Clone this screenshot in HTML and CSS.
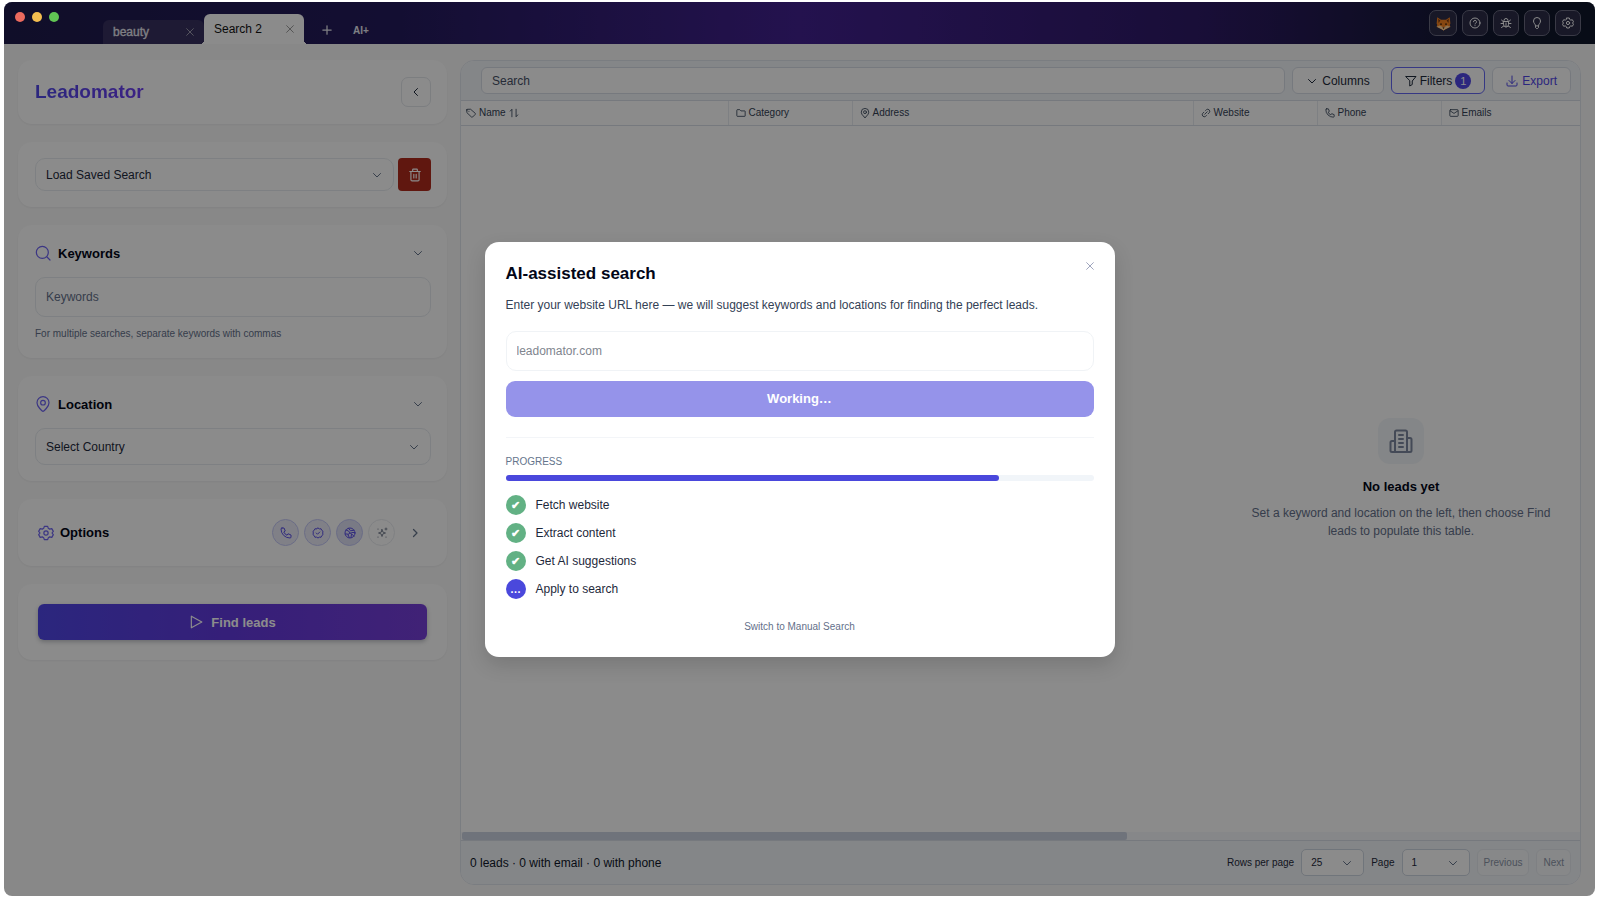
FILE: index.html
```html
<!DOCTYPE html>
<html lang="en">

<head>
  <meta charset="UTF-8">
  <meta name="viewport" content="width=device-width, initial-scale=1.0">
  <title>Leadomator</title>
  <link rel="stylesheet" href="styles.css">
</head>

<body>
  <!-- icon sprite -->
  <svg class="sprite" aria-hidden="true">
    <symbol id="i-x" viewBox="0 0 24 24"><path d="M4 4l16 16M20 4L4 20"/></symbol>
    <symbol id="i-plus" viewBox="0 0 24 24"><path d="M12 2v20M2 12h20"/></symbol>
    <symbol id="i-down" viewBox="0 0 24 24"><path d="M5 9l7 7 7-7"/></symbol>
    <symbol id="i-left" viewBox="0 0 24 24"><path d="M15 5l-7 7 7 7"/></symbol>
    <symbol id="i-right" viewBox="0 0 24 24"><path d="M9 5l7 7-7 7"/></symbol>
    <symbol id="i-search" viewBox="0 0 24 24"><circle cx="11" cy="11" r="9"/><path d="M18 18l4.500 4.500"/></symbol>
    <symbol id="i-pin" viewBox="0 0 24 24"><circle cx="12" cy="10" r="3.500"/><path d="M12 23c-1 0-9-7-9-13a9 9 0 0 1 18 0c0 6-8 13-9 13z"/></symbol>
    <symbol id="i-trash" viewBox="0 0 24 24"><path d="M3 6h18M5 6v14a2 2 0 0 0 2 2h10a2 2 0 0 0 2-2V6M8 6V3a1 1 0 0 1 1-1h6a1 1 0 0 1 1 1v3M10 11v6M14 11v6"/></symbol>
    <symbol id="i-hexgear" viewBox="0 0 24 24"><path d="M9.500 2h5l1 3 2 1.200 3.200-.700 2.300 4-2 2.500 2 2.500-2.300 4-3.200-.700-2 1.200-1 3h-5l-1-3-2-1.200-3.200.700-2.300-4 2-2.500-2-2.500 2.300-4 3.200.700 2-1.200z"/><circle cx="12" cy="12" r="3.200"/></symbol>
    <symbol id="i-phone" viewBox="0 0 24 24"><path d="M4 2h4l2.500 6-3 2a13 13 0 0 0 6.500 6.500l2-3 6 2.500v4a2 2 0 0 1-2 2A18 18 0 0 1 2 4a2 2 0 0 1 2-2z"/></symbol>
    <symbol id="i-badge" viewBox="0 0 24 24"><path d="M12 2l2.800 1.800 3.300-.300 1.300 3 2.600 2-.600 3.500.600 3.300-2.600 2.200-1.300 3-3.300-.200L12 22l-2.800-1.700-3.300.200-1.300-3L2 15.300l.600-3.300L2 8.500l2.600-2 1.300-3 3.300.300z"/><path d="M8.500 12l2.500 2.500 4.500-4.500"/></symbol>
    <symbol id="i-world" viewBox="0 0 24 24"><circle cx="12" cy="12" r="10"/><path d="M4 6l5 2 3 4 5 3 3 4M9 2.500l4 5 7-1M21.500 11l-6 0M2.500 14l5 0 3 7M12 12l-4 3M15 15l-1 6"/></symbol>
    <symbol id="i-spark" viewBox="0 0 24 24"><path d="M12 5l1.800 5.200L19 12l-5.200 1.800L12 19l-1.800-5.200L5 12l5.200-1.800zM20 2v4M18 4h4M4 4v.500M4 20v.500M20 20v.500"/></symbol>
    <symbol id="i-play" viewBox="0 0 24 24"><path d="M4 2l18 10L4 22z"/></symbol>
    <symbol id="i-help" viewBox="0 0 24 24"><circle cx="12" cy="12" r="10"/><path d="M9 9.500A3 3 0 1 1 13 12.500c-.700.300-1 .700-1 1.500M12 17.200v.300"/></symbol>
    <symbol id="i-bug" viewBox="0 0 24 24"><path d="M8 9V7a4 4 0 0 1 8 0v2M7 9h10v6a5 5 0 0 1-10 0zM2 13h5M17 13h5M3 21l4.500-3M21 21l-4.500-3M3 6l4.500 4M21 6l-4.500 4M12 12v8"/></symbol>
    <symbol id="i-bulb" viewBox="0 0 24 24"><path d="M9 17c0-3-4-4-4-9a7 7 0 0 1 14 0c0 5-4 6-4 9zM9 19v2l2 2h2l2-2v-2"/></symbol>
    <symbol id="i-tag" viewBox="0 0 24 24"><path d="M2 4v7l11 10.500a2 2 0 0 0 3 0l6-6a2 2 0 0 0 0-3L11 3H4a2 2 0 0 0-2 2zM7 8v.200"/></symbol>
    <symbol id="i-sort" viewBox="0 0 24 24"><path d="M7 21V3L3 7.500M17 3v18l4-4.500"/></symbol>
    <symbol id="i-folder" viewBox="0 0 24 24"><path d="M2 5a1 1 0 0 1 1-1h6l3 3h9a1 1 0 0 1 1 1v11a1 1 0 0 1-1 1H3a1 1 0 0 1-1-1z"/></symbol>
    <symbol id="i-link" viewBox="0 0 24 24"><path d="M9 15l6-6M11 6l2-2a5 5 0 0 1 7 7l-3 3M13 18l-2 2a5 5 0 0 1-7-7l3-3"/></symbol>
    <symbol id="i-mail" viewBox="0 0 24 24"><rect x="2" y="4" width="20" height="16" rx="2"/><path d="M3 7l9 6 9-6"/></symbol>
    <symbol id="i-filter" viewBox="0 0 24 24"><path d="M2 3h20l-7.500 9v7l-5 3V12z"/></symbol>
    <symbol id="i-export" viewBox="0 0 24 24"><path d="M2 16v4a2 2 0 0 0 2 2h16a2 2 0 0 0 2-2v-4M6 11l6 6 6-6M12 2v15"/></symbol>
    <symbol id="i-building" viewBox="0 0 24 24"><path d="M6 23V3a1.500 1.500 0 0 1 1.500-1.500h9A1.500 1.500 0 0 1 18 3v20M6 12H3a1.500 1.500 0 0 0-1.500 1.500v8A1.500 1.500 0 0 0 3 23h18a1.500 1.500 0 0 0 1.500-1.500v-11A1.500 1.500 0 0 0 21 9h-3M10 6h4M10 10h4M10 14h4M10 18h4"/></symbol>
  </svg>

  <div class="window">
    <header class="titlebar">
      <div class="lights">
        <span class="light red"></span>
        <span class="light yellow"></span>
        <span class="light green"></span>
      </div>
      <nav class="tabs">
        <div class="tab">
          <a href="#beauty">beauty</a>
          <button class="icon-btn" aria-label="Close beauty"><svg class="icon s10"><use href="#i-x"/></svg></button>
        </div>
        <div class="tab active">
          <a href="#search-2">Search 2</a>
          <button class="icon-btn" aria-label="Close Search 2"><svg class="icon s10"><use href="#i-x"/></svg></button>
        </div>
        <button class="tab-btn" aria-label="New tab"><svg class="icon s10 bold"><use href="#i-plus"/></svg></button>
        <button class="tab-btn">AI+</button>
      </nav>
      <div class="tools">
        <button class="tool" aria-label="Account">
          <svg class="fox" viewBox="0 0 24 24">
            <path d="M2 2l6 4h8l6-4 1 10-1 2 1 3-8 4-3 2-3-2-8-4 1-3-1-2z" fill="#f58220"/>
            <path d="M3.500 4.500L7 7l-3 4zM20.500 4.500L17 7l3 4z" fill="#7a3b12"/>
            <path d="M1 17l5-2 4 2 2 2 2-2 4-2 5 2-8 4-3 2-3-2z" fill="#ffd29a"/>
            <circle cx="8" cy="13" r="1.300" fill="#2b1608"/>
            <circle cx="16" cy="13" r="1.300" fill="#2b1608"/>
            <path d="M10.300 18.500h3.400L12 20.800z" fill="#2b1608"/>
          </svg>
        </button>
        <button class="tool" aria-label="Help"><svg class="icon s12"><use href="#i-help"/></svg></button>
        <button class="tool" aria-label="Report a bug"><svg class="icon s12"><use href="#i-bug"/></svg></button>
        <button class="tool" aria-label="Ideas"><svg class="icon s12"><use href="#i-bulb"/></svg></button>
        <button class="tool" aria-label="Settings"><svg class="icon s12"><use href="#i-hexgear"/></svg></button>
      </div>
    </header>

    <div class="content">
      <aside class="sidebar">
        <section class="card brand">
          <h1>Leadomator</h1>
          <button class="collapse" aria-label="Collapse sidebar"><svg class="icon s12"><use href="#i-left"/></svg></button>
        </section>

        <section class="card saved">
          <div class="select-wrap">
            <select class="field saved-select" aria-label="Load saved search"><option>Load Saved Search</option></select>
            <svg class="icon s12"><use href="#i-down"/></svg>
          </div>
          <button class="delete" aria-label="Delete search"><svg class="icon s14"><use href="#i-trash"/></svg></button>
        </section>

        <section class="card">
          <div class="card-head">
            <svg class="icon s16 accent thin"><use href="#i-search"/></svg>
            <h2><label for="keywords">Keywords</label></h2>
            <button class="icon-btn" aria-label="Toggle keywords"><svg class="icon s12"><use href="#i-down"/></svg></button>
          </div>
          <input class="field keywords" id="keywords" type="text" placeholder="Keywords">
          <p class="hint">For multiple searches, separate keywords with commas</p>
        </section>

        <section class="card">
          <div class="card-head">
            <svg class="icon s16 accent thin"><use href="#i-pin"/></svg>
            <h2><label for="country">Location</label></h2>
            <button class="icon-btn" aria-label="Toggle location"><svg class="icon s12"><use href="#i-down"/></svg></button>
          </div>
          <div class="select-wrap">
            <select class="field country" id="country"><option>Select Country</option></select>
            <svg class="icon s12"><use href="#i-down"/></svg>
          </div>
        </section>

        <section class="card options">
          <svg class="icon s16 accent thin"><use href="#i-hexgear"/></svg>
          <h2>Options</h2>
          <div class="pills">
            <button class="pill" aria-label="Phone"><svg class="icon s12"><use href="#i-phone"/></svg></button>
            <button class="pill" aria-label="Verified"><svg class="icon s12"><use href="#i-badge"/></svg></button>
            <button class="pill strong" aria-label="Website"><svg class="icon s12"><use href="#i-world"/></svg></button>
            <button class="pill off" aria-label="AI"><svg class="icon s12"><use href="#i-spark"/></svg></button>
          </div>
          <button class="icon-btn" aria-label="Show options"><svg class="icon s12 heavy"><use href="#i-right"/></svg></button>
        </section>

        <section class="card run">
          <button class="find"><svg class="icon s14"><use href="#i-play"/></svg>Find leads</button>
        </section>
      </aside>

      <main class="panel">
        <div class="toolbar">
          <input class="search" type="search" placeholder="Search" aria-label="Search">
          <button class="btn"><svg class="icon s12"><use href="#i-down"/></svg>Columns</button>
          <button class="btn filters"><svg class="icon s12"><use href="#i-filter"/></svg>Filters <span class="count">1</span></button>
          <button class="btn export"><svg class="icon s12"><use href="#i-export"/></svg>Export</button>
        </div>

        <div class="table-wrap">
          <div class="table-inner">
            <table>
              <colgroup>
                <col class="c-name"><col class="c-mid"><col class="c-address"><col class="c-mid"><col class="c-mid"><col>
              </colgroup>
              <thead>
                <tr>
                  <th><span><svg class="icon s10"><use href="#i-tag"/></svg>Name<svg class="icon s10"><use href="#i-sort"/></svg></span></th>
                  <th><span><svg class="icon s10"><use href="#i-folder"/></svg>Category</span></th>
                  <th><span><svg class="icon s10"><use href="#i-pin"/></svg>Address</span></th>
                  <th><span><svg class="icon s10"><use href="#i-link"/></svg>Website</span></th>
                  <th><span><svg class="icon s10"><use href="#i-phone"/></svg>Phone</span></th>
                  <th><span><svg class="icon s10"><use href="#i-mail"/></svg>Emails</span></th>
                </tr>
              </thead>
            </table>
            <div class="empty">
              <div class="empty-icon"><svg class="icon s24"><use href="#i-building"/></svg></div>
              <h3>No leads yet</h3>
              <p>Set a keyword and location on the left, then choose Find leads to populate this table.</p>
            </div>
          </div>
        </div>
        <div class="scroll-track"><div class="scroll-thumb"></div></div>

        <footer class="pager">
          <p class="totals">0 leads · 0 with email · 0 with phone</p>
          <label for="rows">Rows per page</label>
          <div class="select-wrap">
            <select class="rows" id="rows"><option>25</option></select>
            <svg class="icon s12"><use href="#i-down"/></svg>
          </div>
          <label for="page">Page</label>
          <div class="select-wrap">
            <select class="page" id="page"><option>1</option></select>
            <svg class="icon s12"><use href="#i-down"/></svg>
          </div>
          <button class="step" disabled>Previous</button>
          <button class="step" disabled>Next</button>
        </footer>
      </main>
    </div>

    <div class="overlay">
      <div class="modal" role="dialog" aria-labelledby="modal-title">
        <div class="modal-head">
          <h2 id="modal-title">AI-assisted search</h2>
          <button class="modal-close" aria-label="Close"><svg class="icon s10"><use href="#i-x"/></svg></button>
        </div>
        <p class="lead"><label for="url">Enter your website URL here — we will suggest keywords and locations for finding the perfect leads.</label></p>
        <input class="url" id="url" type="text" placeholder="leadomator.com">
        <button class="working">Working…</button>
        <div class="progress">
          <div class="progress-label">PROGRESS</div>
          <div class="bar"><div class="bar-fill" style="width: 84%"></div></div>
          <ul class="steps">
            <li><span class="dot done">✔</span>Fetch website</li>
            <li><span class="dot done">✔</span>Extract content</li>
            <li><span class="dot done">✔</span>Get AI suggestions</li>
            <li><span class="dot">…</span>Apply to search</li>
          </ul>
        </div>
        <a class="manual" href="#manual">Switch to Manual Search</a>
      </div>
    </div>
  </div>
</body>

</html>
```
FILE: styles.css
```css
* {
  box-sizing: border-box;
}

body {
  margin: 0;
  padding: 2px 5px 2px 4px;
  background: #fff;
  color: #1e293b;
  font-family: "Liberation Sans", Arial, sans-serif;
  font-size: 12px;
}

h1, h2, h3, p, ul {
  margin: 0;
  padding: 0;
}

button, input, select {
  font: inherit;
  color: inherit;
  margin: 0;
}

button {
  display: flex;
  align-items: center;
  justify-content: center;
  padding: 0;
  border: none;
  background: none;
  cursor: pointer;
}

a {
  color: inherit;
  text-decoration: none;
}

.sprite {
  display: none;
}

/* icons */
.icon {
  flex: none;
  fill: none;
  stroke: currentColor;
  stroke-width: 2;
  stroke-linecap: round;
  stroke-linejoin: round;
}

.s10 { width: 10px; height: 10px; }
.s12 { width: 12px; height: 12px; }
.s14 { width: 14px; height: 14px; }
.s16 { width: 16px; height: 16px; }
.s24 { width: 24px; height: 24px; }

.thin { stroke-width: 1.8; }
.bold { stroke-width: 3; }
.heavy { stroke-width: 2.5; }
.accent { color: #6d63f0; }

.icon-btn {
  color: #64748b;
}

/* window */
.window {
  position: relative;
  display: flex;
  flex-direction: column;
  height: calc(100vh - 4px);
  min-height: 700px;
  border-radius: 8px;
  overflow: hidden;
  background: #f8f8f8;
}

.titlebar {
  display: flex;
  height: 42px;
  padding: 0 14px 0 11px;
  background: linear-gradient(90deg, #1e1b4b 0%, #241b5c 25%, #42218f 50%, #2e1a66 75%, #0f172a 95%);
}

.lights {
  position: relative;
  z-index: 2;
  display: flex;
  gap: 7px;
  width: 88px;
  padding-top: 10px;
}

.light {
  width: 10px;
  height: 10px;
  border-radius: 50%;
}

.red { background: #ec6a5e; }
.yellow { background: #f4be4f; }
.green { background: #61c554; }

.tabs {
  display: flex;
  flex: 1;
  align-items: flex-end;
}

.tab {
  display: flex;
  align-items: center;
  justify-content: space-between;
  width: 101px;
  height: 24px;
  padding: 0 9px 0 10px;
  border-radius: 6px 6px 0 0;
  background: #37305f;
  color: #e8e8f0;
  -webkit-text-stroke: 0.3px;
}

.tab.active {
  position: relative;
  width: 100px;
  height: 30px;
  background: #fdfdfd;
  color: #111;
  -webkit-text-stroke: 0;
}

/* flared feet of the active tab */
.tab.active::before,
.tab.active::after {
  content: "";
  position: absolute;
  bottom: 0;
  width: 4px;
  height: 4px;
}

.tab.active::before {
  right: 100%;
  background: radial-gradient(circle at 0 0, transparent 4px, #fdfdfd 4px);
}

.tab.active::after {
  left: 100%;
  background: radial-gradient(circle at 100% 0, transparent 4px, #fdfdfd 4px);
}

.tab .icon-btn {
  color: #b0b0bc;
}

.tab.active .icon-btn {
  color: #888;
}

.tab-btn {
  height: 28px;
  margin-left: 18px;
  color: #e8e8f0;
  font-size: 10px;
  font-weight: bold;
}

.tab-btn + .tab-btn {
  margin-left: 21px;
}

.tools {
  display: flex;
  gap: 5px;
  padding-top: 8px;
}

.tool {
  width: 26px;
  height: 26px;
  border: 1px solid #6a6a80;
  border-radius: 7px;
  background: #2c2c48;
  color: #fff;
}

.tool:first-child {
  width: 28px;
}

.fox {
  width: 15px;
  height: 15px;
}

/* layout */
.content {
  display: flex;
  flex: 1;
  gap: 13px;
  min-height: 0;
  padding: 16px 14px 11px;
}

.sidebar {
  display: flex;
  flex-direction: column;
  flex: none;
  gap: 18px;
  width: 429px;
}

.card {
  padding: 16px 16px 16px 17px;
  border-radius: 14px;
  background: #fdfdfd;
  box-shadow: 0 1px 2px rgba(15, 23, 42, 0.05);
}

.brand {
  display: flex;
  align-items: center;
  justify-content: space-between;
  height: 64px;
}

.brand h1 {
  font-size: 19px;
  background: linear-gradient(90deg, #4f46e5, #6d3ff0);
  -webkit-background-clip: text;
  background-clip: text;
  color: transparent;
}

.collapse {
  width: 30px;
  height: 30px;
  border: 1px solid #e2e5ea;
  border-radius: 7px;
}

.saved {
  display: flex;
  gap: 4px;
}

.saved .select-wrap {
  flex: 1;
}

/* select and its chevron share one grid cell */
.select-wrap {
  display: grid;
  align-items: center;
}

.select-wrap > * {
  grid-area: 1 / 1;
}

.select-wrap .icon {
  justify-self: end;
  margin-right: 11px;
  color: #64748b;
  pointer-events: none;
}

select {
  appearance: none;
  width: 100%;
}

.field {
  width: 100%;
  padding: 0 10px;
  border: 1px solid #e6eaee;
  border-radius: 10px;
  background: #fdfdfd;
}

.saved-select {
  height: 33px;
}

.delete {
  width: 33px;
  height: 33px;
  border-radius: 4px;
  background: #b02a1c;
  color: #fff;
}

.card-head {
  display: flex;
  align-items: center;
  gap: 7px;
  height: 24px;
  margin-bottom: 12px;
}

h2 {
  color: #020617;
  font-size: 13px;
}

.card-head h2 {
  flex: 1;
}

.card-head .icon-btn {
  margin-right: 7px;
}

.keywords {
  display: block;
  height: 40px;
}

::placeholder {
  color: #64708a;
  opacity: 1;
}

.hint {
  margin-top: 9px;
  color: #64708a;
  font-size: 10px;
  line-height: 16px;
}

.country {
  height: 37px;
}

.options {
  display: flex;
  align-items: center;
  padding: 20px 26px 20px 20px;
}

.options h2 {
  flex: 1;
  margin-left: 6px;
}

.pills {
  display: flex;
  gap: 5px;
  margin-right: 14px;
}

.pill {
  width: 27px;
  height: 27px;
  border: 1px solid #c3c6f5;
  border-radius: 50%;
  background: #e9eaf6;
  color: #5b50e6;
}

.pill.strong {
  background: #dcdef2;
}

.pill.off {
  border-color: #e8eaee;
  background: none;
  color: #7c8494;
}

.run {
  padding: 20px;
}

.find {
  gap: 8px;
  width: 100%;
  height: 36px;
  border-radius: 6px;
  background: linear-gradient(90deg, #4f46e5, #6239dc 50%, #763ed8);
  box-shadow: 0 2px 4px rgba(15, 23, 42, 0.25);
  color: #fff;
  font-size: 13px;
  font-weight: bold;
}

/* leads panel */
.panel {
  display: flex;
  flex: 1;
  flex-direction: column;
  min-width: 0;
  border: 1px solid #dfe4ec;
  border-radius: 14px;
  overflow: hidden;
  background: #fdfdfd;
}

.toolbar {
  display: flex;
  align-items: center;
  flex: none;
  gap: 7px;
  height: 40px;
  padding: 0 9px 0 20px;
  border-bottom: 1px solid #d7dde6;
  background: #f1f4f7;
}

.search {
  flex: 1;
  min-width: 0;
  height: 27px;
  padding: 0 10px;
  border: 1px solid #d7dde6;
  border-radius: 6px;
  background: #fdfdfd;
}

.search::placeholder {
  color: #475066;
}

.btn {
  gap: 4px;
  height: 27px;
  padding: 0 13px;
  border: 1px solid #d7dde6;
  border-radius: 6px;
  background: #fdfdfd;
}

.filters {
  gap: 3px;
  border-color: #6366f1;
}

.export {
  color: #4f46e5;
}

.count {
  width: 16px;
  height: 16px;
  border-radius: 50%;
  background: #4f46e5;
  color: #fff;
  font-size: 11px;
  line-height: 16px;
}

.table-wrap {
  flex: 1;
  overflow: hidden;
}

.table-inner {
  display: flex;
  flex-direction: column;
  width: 1880px;
  height: 100%;
}

table {
  width: 100%;
  border-collapse: collapse;
  table-layout: fixed;
}

.c-name { width: 267px; }
.c-mid { width: 124px; }
.c-address { width: 341px; }

th {
  height: 24px;
  padding: 0 0 0 7px;
  border-right: 1px solid #e6eaef;
  border-bottom: 1px solid #d7dde6;
  color: #334155;
  font-size: 10px;
  font-weight: normal;
}

th:first-child {
  padding-left: 5px;
}

th span {
  display: flex;
  align-items: center;
  gap: 3px;
}

.empty {
  display: flex;
  flex: 1;
  flex-direction: column;
  align-items: center;
  justify-content: center;
  text-align: center;
}

.empty-icon {
  display: flex;
  align-items: center;
  justify-content: center;
  width: 46px;
  height: 46px;
  border-radius: 12px;
  background: #f1f4f7;
  color: #7c879e;
}

.empty h3 {
  margin: 14px 0 8px;
  color: #020617;
  font-size: 13px;
  line-height: 18px;
}

.empty p {
  width: 310px;
  color: #64708a;
  line-height: 18px;
}

.scroll-track {
  height: 8px;
  padding-left: 1px;
  background: #f4f6f9;
}

.scroll-thumb {
  width: 59.5%;
  height: 8px;
  border-radius: 2px;
  background: #cbd1e1;
}

.pager {
  display: flex;
  align-items: center;
  gap: 7px;
  height: 44px;
  padding: 0 9px;
  border-top: 1px solid #d7dde6;
  background: #f1f4f7;
  font-size: 10px;
}

.totals {
  flex: 1;
  color: #0f172a;
  font-size: 12px;
}

.rows, .page {
  height: 27px;
  padding: 0 9px;
  border: 1px solid #cdd5e0;
  border-radius: 5px;
  background: #fdfdfd;
}

.rows { width: 63px; }
.page { width: 68px; }

.step {
  height: 27px;
  padding: 0 6px;
  border: 1px solid #e6eaef;
  border-radius: 6px;
  background: #f6f8fa;
  color: #8b95a7;
}

/* modal */
.overlay {
  position: absolute;
  inset: 0;
  z-index: 1;
  display: flex;
  align-items: center;
  justify-content: center;
  background: rgba(0, 0, 0, 0.45);
}

.modal {
  width: 630px;
  max-width: 90%;
  padding: 20px 21px 22px;
  border-radius: 14px;
  background: #fff;
  box-shadow: 0 8px 20px rgba(0, 0, 0, 0.14);
}

.modal-head {
  display: flex;
  align-items: flex-start;
  justify-content: space-between;
}

.modal-head h2 {
  font-size: 17px;
  line-height: 24px;
}

.modal-close {
  width: 8px;
  height: 8px;
  color: #8b93b0;
}

.lead {
  margin-top: 10px;
  color: #334155;
  line-height: 18px;
}

.url {
  display: block;
  width: 100%;
  height: 40px;
  margin-top: 17px;
  padding: 0 10px;
  border: 1px solid #f0f3f6;
  border-radius: 10px;
}

.url::placeholder {
  color: #80858e;
}

.working {
  width: 100%;
  height: 36px;
  margin-top: 10px;
  border-radius: 9px;
  background: #9593ea;
  color: #fff;
  font-size: 13px;
  font-weight: bold;
}

.progress {
  margin-top: 20px;
  padding-top: 16px;
  border-top: 1px solid #f3f5f8;
}

.progress-label {
  color: #64748b;
  font-size: 10px;
  line-height: 16px;
}

.bar {
  height: 6px;
  margin-top: 5px;
  border-radius: 3px;
  background: #f1f5f9;
}

.bar-fill {
  height: 6px;
  border-radius: 3px;
  background: #4a48dc;
}

.steps {
  display: flex;
  flex-direction: column;
  gap: 8px;
  margin-top: 14px;
  list-style: none;
}

.steps li {
  display: flex;
  align-items: center;
  gap: 10px;
}

.dot {
  width: 20px;
  height: 20px;
  border-radius: 50%;
  background: #4a48dc;
  color: #fff;
  font-size: 11px;
  font-weight: bold;
  line-height: 20px;
  text-align: center;
}

.dot.done {
  background: #62b184;
}

.manual {
  display: block;
  margin-top: 20px;
  color: #64708a;
  font-size: 10px;
  line-height: 16px;
  text-align: center;
}
```
